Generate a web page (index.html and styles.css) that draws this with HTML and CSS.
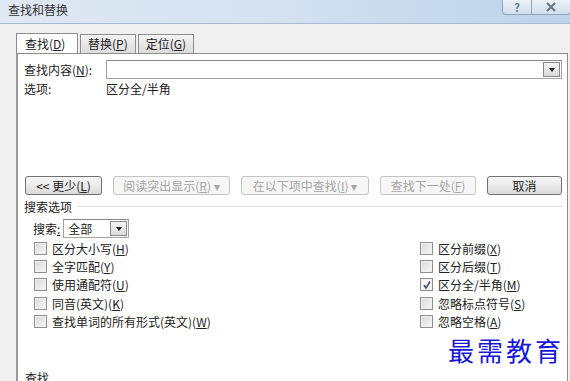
FILE: index.html
```html
<!DOCTYPE html>
<html lang="zh-CN">
<head>
  <meta charset="UTF-8" />
  <title>查找和替换</title>
  <link rel="stylesheet" href="styles.css">
</head>
<body>

  <!-- 标题栏 -->
  <div class="titlebar">
    <span class="title">查找和替换</span>
    <div class="caption-btns">
      <span class="cap-btn cap-help">?</span>
      <span class="cap-btn cap-close">
        <svg width="12" height="10" viewBox="0 0 12 10"><path d="M2 1 L10 9 M10 1 L2 9" stroke="#6b7a8c" stroke-width="2.2" fill="none"/></svg>
      </span>
    </div>
  </div>

  <div class="frame">
    <div class="tabs">
      <div class="tab active">查找(<u>D</u>)</div>
      <div class="tab">替换(<u>P</u>)</div>
      <div class="tab">定位(<u>G</u>)</div>
    </div>

    <div class="panel">
      <div class="find-row">
        <label>查找内容(<u>N</u>):</label>
        <div class="combo">
          <span class="combo-text"></span>
          <span class="drop"><i></i></span>
        </div>
      </div>
      <div class="find-row opts">
        <span>选项:</span>
        <span>区分全/半角</span>
      </div>

      <div class="btn-row">
        <button class="btn w1">&lt;&lt; 更少(<u>L</u>)</button>
        <button class="btn off w2">阅读突出显示(<u>R</u>) ▾</button>
        <button class="btn off w3">在以下项中查找(<u>I</u>) ▾</button>
        <button class="btn off w4">查找下一处(<u>F</u>)</button>
        <button class="btn w5">取消</button>
      </div>

      <div class="group-title"><span>搜索选项</span><i></i></div>

      <div class="search-row">
        <span>搜索<u>:</u></span>
        <div class="select">
          <span class="combo-text">全部</span>
          <span class="drop"><i></i></span>
        </div>
      </div>

      <div class="checks">
        <ul>
          <li><span class="cb"></span>区分大小写(<u>H</u>)</li>
          <li><span class="cb"></span>全字匹配(<u>Y</u>)</li>
          <li><span class="cb"></span>使用通配符(<u>U</u>)</li>
          <li><span class="cb"></span>同音(英文)(<u>K</u>)</li>
          <li><span class="cb"></span>查找单词的所有形式(英文)(<u>W</u>)</li>
        </ul>
        <ul>
          <li><span class="cb"></span>区分前缀(<u>X</u>)</li>
          <li><span class="cb"></span>区分后缀(<u>T</u>)</li>
          <li><span class="cb checked"><svg width="10" height="10" viewBox="0 0 10 10"><path d="M2 5 L4 8 L8 1.5" stroke="#3d4b7a" stroke-width="1.5" fill="none"/></svg></span>区分全/半角(<u>M</u>)</li>
          <li><span class="cb"></span>忽略标点符号(<u>S</u>)</li>
          <li><span class="cb"></span>忽略空格(<u>A</u>)</li>
        </ul>
      </div>

      <div class="section-cut">查找</div>

      <div class="watermark">最需教育</div>
    </div>
  </div>

</body>
</html>
```

FILE: styles.css
```css
body {
  margin: 0;
  width: 570px;
  height: 381px;
  overflow: hidden;
  background: #f0f0f0;
  font-family: "Noto Sans CJK SC", "Noto Sans", sans-serif;
  font-size: 12px;
  color: #222;
}

u {
  text-decoration: underline;
}

/* 标题栏 */
.titlebar {
  height: 23px;
  display: flex;
  justify-content: space-between;
  background: linear-gradient(90deg, #dfe8f3 0%, #d3e1f0 50%, #bcd2ea 100%);
  border-bottom: 1px solid #a9bbd0;
}

.title {
  padding-left: 8px;
  line-height: 20px;
  color: #333;
}

.caption-btns {
  display: flex;
  height: 14px;
  margin-right: -1px;
  border: 1px solid #93a5ba;
  border-top: none;
  border-radius: 0 0 4px 4px;
  background: linear-gradient(#eaf1f8, #d2dfec);
}

.cap-btn {
  display: flex;
  align-items: center;
  justify-content: center;
  font-weight: bold;
  color: #6b7a8c;
  font-size: 11px;
  line-height: 12px;
}

.cap-help {
  width: 28px;
  border-right: 1px solid #93a5ba;
}

.cap-close {
  width: 38px;
}

/* 选项卡 */
.frame {
  padding: 9px 2px 0 16px;
}

.tabs {
  display: flex;
  height: 20px;
  align-items: flex-end;
}

.tab {
  height: 18px;
  line-height: 18px;
  padding: 0 7px;
  margin-right: 2px;
  border: 1px solid #8d8d8d;
  border-bottom: none;
  background: linear-gradient(#f3f3f3, #dcdcdc);
}

.tab.active {
  height: 20px;
  line-height: 20px;
  width: 44px;
  padding: 0 8px;
  margin-bottom: -1px;
  background: #fff;
  position: relative;
}

.panel {
  position: relative;
  height: 322px;
  overflow: hidden;
  background: #fff;
  border: 1px solid #8d8d8d;
  border-left: 2px solid #9a9a9a;
  padding: 6px 5px 0 6px;
}

.find-row {
  display: grid;
  grid-template-columns: 82px 1fr;
  align-items: center;
  height: 19px;
}

.find-row.opts {
  height: 18px;
}

.combo,
.select {
  display: flex;
  height: 17px;
  border: 1px solid #a3a3a3;
  border-top-color: #8a8a8a;
  background: #fff;
}

.combo-text {
  flex: 1;
  padding-left: 4px;
  line-height: 17px;
}

.drop {
  width: 15px;
  margin: 1px;
  display: flex;
  align-items: center;
  justify-content: center;
  border: 1px solid #8a8a8a;
  background: linear-gradient(#f4f4f4, #dadada);
}

.drop i {
  border-left: 3px solid transparent;
  border-right: 3px solid transparent;
  border-top: 4px solid #222;
}

/* 按钮行 */
.btn-row {
  display: flex;
  gap: 11px;
  margin-top: 79px;
  padding-left: 1px;
}

.btn {
  height: 19px;
  padding: 0;
  font-family: inherit;
  font-size: 12px;
  color: #222;
  border: 1px solid #707070;
  border-radius: 3px;
  background: linear-gradient(#f6f6f6 0%, #ebebeb 50%, #dadada 100%);
}

.btn.off {
  color: #a5a5a5;
  border-color: #c4c4c4;
  background: #f6f6f6;
}

.w1 { width: 77px; }
.w2 { width: 117px; }
.w3 { width: 128px; }
.w4 { width: 96px; }
.w5 { width: 75px; }

/* 搜索选项 */
.group-title {
  display: flex;
  align-items: center;
  margin-top: 3px;
  height: 16px;
}

.group-title i {
  flex: 1;
  height: 1px;
  margin-left: 6px;
  background: #dcdcdc;
}

.search-row {
  display: flex;
  align-items: center;
  gap: 3px;
  margin-top: 5px;
  padding-left: 9px;
}

.select {
  width: 64px;
  height: 17px;
}

.checks {
  display: flex;
  justify-content: space-between;
  margin-top: 1px;
  padding-left: 10px;
  padding-right: 30px;
}

.checks ul {
  list-style: none;
  margin: 0;
  padding: 0;
}

.checks ul:last-child {
  width: 112px;
}

.checks li {
  display: flex;
  align-items: center;
  height: 18.4px;
}

.cb {
  width: 11px;
  height: 11px;
  margin-right: 5px;
  display: flex;
  align-items: center;
  justify-content: center;
  border: 1px solid #8f8f8f;
  background: linear-gradient(135deg, #d9d9d9, #f7f7f7);
  box-shadow: inset 0 0 0 1px #f0f0f0;
}

.cb.checked {
  background: #f4f4f4;
}

.section-cut {
  margin-top: 38px;
  padding-left: 1px;
}

.watermark {
  position: absolute;
  left: 430px;
  top: 277px;
  font-size: 26px;
  letter-spacing: 3px;
  color: #1717d6;
  font-family: "Noto Sans CJK SC", serif;
}
```
